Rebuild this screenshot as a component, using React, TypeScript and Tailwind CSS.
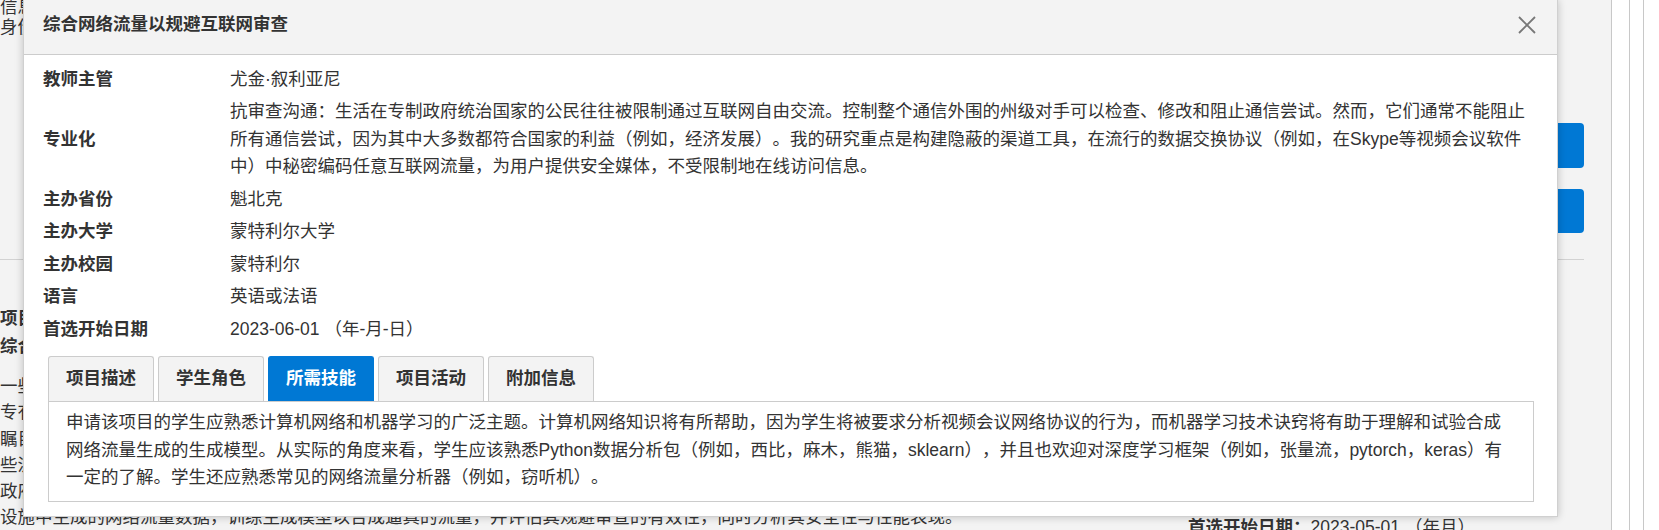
import React from "react";

const tabs = ["项目描述", "学生角色", "所需技能", "项目活动", "附加信息"];

const rows: [string, string][] = [
  ["教师主管", "尤金·叙利亚尼"],
  [
    "专业化",
    "抗审查沟通：生活在专制政府统治国家的公民往往被限制通过互联网自由交流。控制整个通信外围的州级对手可以检查、修改和阻止通信尝试。然而，它们通常不能阻止所有通信尝试，因为其中大多数都符合国家的利益（例如，经济发展）。我的研究重点是构建隐蔽的渠道工具，在流行的数据交换协议（例如，在Skype等视频会议软件中）中秘密编码任意互联网流量，为用户提供安全媒体，不受限制地在线访问信息。",
  ],
  ["主办省份", "魁北克"],
  ["主办大学", "蒙特利尔大学"],
  ["主办校园", "蒙特利尔"],
  ["语言", "英语或法语"],
  ["首选开始日期", "2023-06-01 （年-月-日）"],
];

const bgLines = ["一些", "专有", "瞩目", "些流", "政府"];

export default function App() {
  return (
    <div className="relative h-[530px] w-full overflow-hidden bg-[#f3f3f3] text-[#333333] font-['Liberation_Sans','Noto_Sans_CJK_SC',sans-serif] text-[17.5px] leading-[27.5px] [text-spacing-trim:space-all] [text-autospace:no-autospace]">
      {/* Background page */}
      <div className="flex h-full">
        <div className="flex w-[1611px] shrink-0 flex-col overflow-hidden">
          <div className="flex h-[259px] w-[1584px] shrink-0">
            <div className="flex-1 overflow-hidden whitespace-nowrap">
              <div className="leading-[14px]">信息</div>
              <div>身份</div>
            </div>
            <div className="flex w-[416px] flex-col gap-[21px] pt-[123px]">
              <div className="h-[45px] rounded-[4px] bg-[#0078d4]" />
              <div className="h-[44px] rounded-[4px] bg-[#0078d4]" />
            </div>
          </div>
          <div className="w-[1584px] shrink-0 border-t border-[#d2d2d2]" />
          <div className="flex w-[1584px] shrink-0">
            <div className="flex-1 overflow-hidden whitespace-nowrap">
              <div className="mt-[45px] font-bold">项目</div>
              <div className="font-bold">综合</div>
              <div className="mt-[13px] leading-[26.25px]">
                {bgLines.map((l, i) => (
                  <div key={i}>{l}</div>
                ))}
                <div>设施中生成的网络流量数据，训练生成模型以合成逼真的流量，并评估其规避审查的有效性，同时分析其安全性与性能表现。</div>
              </div>
            </div>
            <div className="w-[416px] whitespace-nowrap">
              <div className="ml-[20px] mt-[254px]">
                <span className="font-bold">首选开始日期：</span>2023-05-01 （年月）
              </div>
            </div>
          </div>
        </div>
        <div className="flex flex-1 border-l border-[#c8c8c8] bg-white">
          <div className="w-[17px]" />
          <div className="w-[14px] border-l border-[#c8c8c8]" />
          <div className="flex-1 border-l border-[#c8c8c8]" />
        </div>
      </div>

      {/* Modal dialog */}
      <div className="absolute left-[23px] top-0 w-[1535px] border border-t-0 border-[#d0d0d0] bg-white pb-[14px] shadow-[0_0_8px_rgba(0,0,0,0.22)]">
        <div className="flex h-[55px] items-center justify-between border-b border-[#cccccc] bg-[#f3f3f3] pb-[5px] pl-[19px] pr-[20px]">
          <div className="font-bold">综合网络流量以规避互联网审查</div>
          <svg width="18" height="18" viewBox="0 0 18 18" className="mr-[1px]">
            <path d="M1 1 L17 17 M17 1 L1 17" stroke="#777777" strokeWidth="1.8" fill="none" />
          </svg>
        </div>

        <div className="grid grid-cols-[187px_1fr] pl-[19px] pr-[24px] pt-[8px]">
          {rows.map(([k, v]) => (
            <React.Fragment key={k}>
              <div className="flex items-center py-[2.5px] font-bold">{k}</div>
              <div className="py-[2.5px]">{v}</div>
            </React.Fragment>
          ))}
        </div>

        <div className="ml-[24px] mr-[23px] mt-[10.5px]">
          <div className="flex gap-[4px]">
            {tabs.map((t) => {
              const active = t === "所需技能";
              return (
                <div
                  key={t}
                  className={
                    active
                      ? "flex h-[45px] w-[106px] items-center justify-center rounded-t-[3px] border border-b-0 border-[#0078d4] bg-[#0078d4] font-bold text-white"
                      : "flex h-[45px] w-[106px] items-center justify-center rounded-t-[3px] border border-b-0 border-[#cccccc] bg-[#f3f3f3] font-bold text-[#333333]"
                  }
                >
                  {t}
                </div>
              );
            })}
          </div>
          <div className="border border-[#cccccc] px-[17px] pb-[9px] pt-[7px]">
            申请该项目的学生应熟悉计算机网络和机器学习的广泛主题。计算机网络知识将有所帮助，因为学生将被要求分析视频会议网络协议的行为，而机器学习技术诀窍将有助于理解和试验合成网络流量生成的生成模型。从实际的角度来看，学生应该熟悉Python数据分析包（例如，西比，麻木，熊猫，sklearn），并且也欢迎对深度学习框架（例如，张量流，pytorch，keras）有一定的了解。学生还应熟悉常见的网络流量分析器（例如，窃听机）。
          </div>
        </div>
      </div>
    </div>
  );
}
